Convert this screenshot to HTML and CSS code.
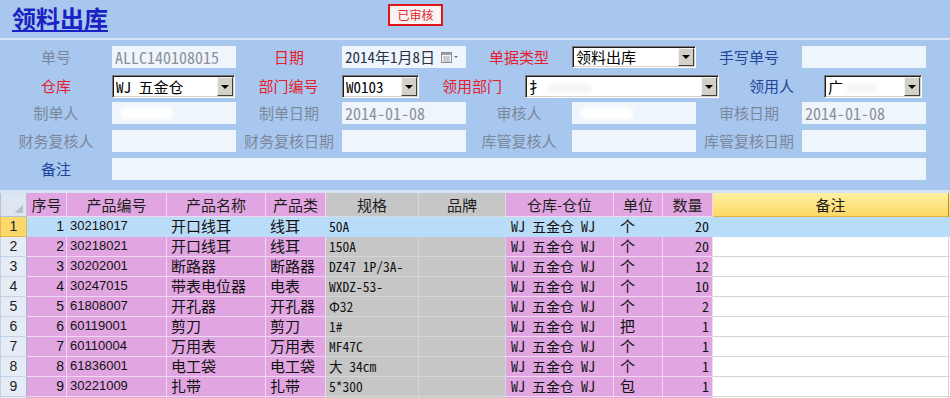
FILE: index.html
```html
<!DOCTYPE html>
<html lang="zh-CN">
<head>
    <meta charset="utf-8" />
    <title>领料出库</title>
    <link rel="stylesheet" href="styles.css">
</head>
<body>
<div class="bill">
    <header class="bill-head">
        <h1 class="bill-title">领料出库</h1>
        <span class="stamp">已审核</span>
    </header>

    <div class="bill-form">
        <div class="row row-first">
            <label class="lbl gray">单号</label>
            <div class="field">ALLC140108015</div>
            <label class="lbl red">日期</label>
            <div class="field date">
                <span class="date-text">2014年1月8日</span>
                <svg class="cal-icon" width="11" height="11" viewBox="0 0 11 11">
                    <rect x="0.5" y="0.5" width="10" height="10" fill="#f4f4f4" stroke="#8a8f98" />
                    <rect x="1" y="1" width="9" height="2" fill="#9aa0a8" />
                    <path d="M2 5h7M2 7h7M2 9h7M4 4v6M7 4v6" stroke="#b4b8be" stroke-width="1" />
                </svg>
                <span class="mini-arrow"></span>
            </div>
            <label class="lbl red">单据类型</label>
            <div class="combo"><span class="val">领料出库</span><i class="drop"></i></div>
            <label class="lbl blue">手写单号</label>
            <div class="field"></div>
        </div>

        <div class="row row-dept">
            <label class="lbl red">仓库</label>
            <div class="combo"><span class="val">WJ 五金仓</span><i class="drop"></i></div>
            <label class="lbl red">部门编号</label>
            <div class="combo"><span class="val">W0103</span><i class="drop"></i></div>
            <label class="lbl red">领用部门</label>
            <div class="combo"><span class="val">扌<b class="smudge"></b></span><i class="drop"></i></div>
            <label class="lbl blue">领用人</label>
            <div class="combo"><span class="val">广<b class="smudge short"></b></span><i class="drop"></i></div>
        </div>

        <div class="row">
            <label class="lbl gray">制单人</label>
            <div class="field"><b class="smudge white"></b></div>
            <label class="lbl gray">制单日期</label>
            <div class="field">2014-01-08</div>
            <label class="lbl gray">审核人</label>
            <div class="field"><b class="smudge white"></b></div>
            <label class="lbl gray">审核日期</label>
            <div class="field">2014-01-08</div>
        </div>

        <div class="row">
            <label class="lbl gray">财务复核人</label>
            <div class="field"></div>
            <label class="lbl gray">财务复核日期</label>
            <div class="field"></div>
            <label class="lbl gray">库管复核人</label>
            <div class="field"></div>
            <label class="lbl gray">库管复核日期</label>
            <div class="field"></div>
        </div>

        <div class="row row-note">
            <label class="lbl blue">备注</label>
            <div class="field"></div>
        </div>
    </div>

    <table class="lines">
        <colgroup>
            <col style="width:26px"><col style="width:40px"><col style="width:100px"><col style="width:99px">
            <col style="width:60px"><col style="width:93px"><col style="width:87px"><col style="width:108px">
            <col style="width:49px"><col style="width:50px"><col style="width:236px"><col style="width:2px">
        </colgroup>
        <thead>
            <tr>
                <th class="corner"></th>
                <th>序号</th>
                <th>产品编号</th>
                <th>产品名称</th>
                <th>产品类</th>
                <th class="grey">规格</th>
                <th class="grey">品牌</th>
                <th>仓库-仓位</th>
                <th>单位</th>
                <th>数量</th>
                <th class="active">备注</th>
                <th class="active"></th>
            </tr>
        </thead>
        <tbody>
            <tr class="current">
                <th>1</th><td>1</td><td>30218017</td><td>开口线耳</td><td>线耳</td><td>50A</td><td></td>
                <td>WJ 五金仓 WJ</td><td>个</td><td>20</td><td></td><td></td>
            </tr>
            <tr>
                <th>2</th><td>2</td><td>30218021</td><td>开口线耳</td><td>线耳</td><td>150A</td><td></td>
                <td>WJ 五金仓 WJ</td><td>个</td><td>20</td><td></td><td></td>
            </tr>
            <tr>
                <th>3</th><td>3</td><td>30202001</td><td>断路器</td><td>断路器</td><td>DZ47 1P/3A-</td><td></td>
                <td>WJ 五金仓 WJ</td><td>个</td><td>12</td><td></td><td></td>
            </tr>
            <tr>
                <th>4</th><td>4</td><td>30247015</td><td>带表电位器</td><td>电表</td><td>WXDZ-53-</td><td></td>
                <td>WJ 五金仓 WJ</td><td>个</td><td>10</td><td></td><td></td>
            </tr>
            <tr>
                <th>5</th><td>5</td><td>61808007</td><td>开孔器</td><td>开孔器</td><td>Φ32</td><td></td>
                <td>WJ 五金仓 WJ</td><td>个</td><td>2</td><td></td><td></td>
            </tr>
            <tr>
                <th>6</th><td>6</td><td>60119001</td><td>剪刀</td><td>剪刀</td><td>1#</td><td></td>
                <td>WJ 五金仓 WJ</td><td>把</td><td>1</td><td></td><td></td>
            </tr>
            <tr>
                <th>7</th><td>7</td><td>60110004</td><td>万用表</td><td>万用表</td><td>MF47C</td><td></td>
                <td>WJ 五金仓 WJ</td><td>个</td><td>1</td><td></td><td></td>
            </tr>
            <tr>
                <th>8</th><td>8</td><td>61836001</td><td>电工袋</td><td>电工袋</td><td>大 34cm</td><td></td>
                <td>WJ 五金仓 WJ</td><td>个</td><td>1</td><td></td><td></td>
            </tr>
            <tr>
                <th>9</th><td>9</td><td>30221009</td><td>扎带</td><td>扎带</td><td>5*300</td><td></td>
                <td>WJ 五金仓 WJ</td><td>包</td><td>1</td><td></td><td></td>
            </tr>
            <tr>
                <th>10</th><td>10</td><td>30247016</td><td>带表电流表</td><td>电表</td><td>WXDZ-54-</td><td></td>
                <td>WJ 五金仓 WJ</td><td>个</td><td>2</td><td></td><td></td>
            </tr>
        </tbody>
    </table>
</div>
</body>
</html>
```

FILE: styles.css
```css
* {
    box-sizing: border-box;
}

body {
    margin: 0;
    background: #a8c7ef;
    font-family: "Noto Sans CJK SC", sans-serif;
    overflow: hidden;
}

.bill {
    width: 950px;
    height: 398px;
    overflow: hidden;
}

/* title bar */
.bill-head {
    height: 40px;
    display: flex;
    align-items: flex-start;
    border-bottom: 2px solid #d6e4f6;
}

.bill-title {
    width: 388px;
    margin: 0;
    padding: 0 0 0 12px;
    font-size: 24px;
    line-height: 35px;
    font-weight: bold;
    color: #1a22c4;
    text-decoration: underline;
    text-underline-offset: 2px;
}

.stamp {
    margin-top: 4px;
    width: 55px;
    height: 22px;
    border: 2px solid #e01616;
    background: #faf3f2;
    color: #e0282c;
    font-size: 12px;
    line-height: 18px;
    text-align: center;
}

/* header form */
.bill-form {
    padding: 6px 0 10px;
    border-bottom: 3px solid #d4e2f5;
}

.row {
    display: grid;
    grid-template-columns: 112px 124px 106px 124px 106px 124px 106px 124px;
    height: 22px;
    margin-bottom: 6px;
}

.row-first {
    margin-bottom: 7px;
}

.row-dept {
    grid-template-columns: 112px 123px 107px 77px 106px 194px 105px 98px;
    height: 23px;
    margin-bottom: 4px;
}

.row-note {
    grid-template-columns: 112px 814px;
    margin-bottom: 0;
}

.lbl {
    font-size: 15px;
    line-height: 22px;
    text-align: center;
    white-space: nowrap;
}

.lbl.gray { color: #7b879b; }
.lbl.red { color: #e3202c; }
.lbl.blue { color: #21459a; }

.field {
    background: #eef5fc;
    color: #8b9098;
    font-family: "Noto Sans Mono CJK SC", "Liberation Mono", "Noto Sans CJK SC", monospace;
    font-size: 16px;
    line-height: 22px;
    padding-left: 3px;
    white-space: nowrap;
    overflow: hidden;
}

.field.date {
    display: flex;
    align-items: center;
    color: #2a3346;
}

.date-text {
    width: 93px;
    overflow: hidden;
    font-size: 15px;
}

.cal-icon {
    margin-left: 3px;
}

.mini-arrow {
    margin-left: 2px;
    border: 2px solid transparent;
    border-top: 2px solid #6a7078;
    border-bottom: 0;
}

.combo {
    display: flex;
    background: #fff;
    border: 1px solid;
    border-color: #7a7a7a #fff #fff #7a7a7a;
    box-shadow: inset 1px 1px 0 #1c1c1c, inset -1px -1px 0 #d4d0c8;
    padding: 1px;
    font-family: "Noto Sans Mono CJK SC", "Liberation Mono", "Noto Sans CJK SC", monospace;
    font-size: 15px;
    color: #000;
}

.row-first .combo {
    height: 22px;
}

.combo .val {
    flex: 1;
    padding-left: 2px;
    line-height: 19px;
    white-space: nowrap;
    overflow-x: clip;
    overflow-y: visible;
}

.row-first .combo .val {
    line-height: 18px;
}

.drop {
    width: 16px;
    display: flex;
    align-items: center;
    justify-content: center;
    background: #d4d0c8;
    border: 1px solid;
    border-color: #f4f4f4 #404040 #404040 #f4f4f4;
}

.drop::after {
    content: "";
    border: 4px solid transparent;
    border-top: 4px solid #000;
    border-bottom: 0;
}

/* privacy smear over names */
.smudge {
    display: inline-block;
    width: 44px;
    height: 9px;
    margin-left: 4px;
    vertical-align: middle;
    background: #f4f4f4;
    border-radius: 4px;
    filter: blur(2px);
}

.smudge.short {
    width: 30px;
}

.smudge.white {
    width: 52px;
    height: 12px;
    margin: 5px 0 0 6px;
    vertical-align: top;
    background: #fff;
}

/* detail grid */
.lines {
    width: 950px;
    border-collapse: collapse;
    table-layout: fixed;
    font-size: 15px;
    color: #111;
}

.lines th,
.lines td {
    padding: 0 3px;
    line-height: 18px;
    white-space: nowrap;
    overflow: hidden;
}

.lines thead th {
    height: 23px;
    line-height: 21px;
    font-weight: normal;
    color: #1e1e1e;
    background: #e1a6e1;
    border: 1px solid #efd9ef;
    border-top: 0;
}

.lines thead th.grey {
    background: #c6c6c6;
    border-color: #dadada;
}

.lines thead th.active {
    background: linear-gradient(#fff0a4, #fcd862);
    border-color: #e4b53e;
    border-right-color: #b58e2e;
}

.lines thead th.corner {
    background: linear-gradient(135deg, transparent 50%, #b3c0d2 50%) right 3px bottom 3px / 8px 8px no-repeat, #dde6f1;
    border-color: #b3c4da;
}

.lines tbody tr {
    height: 20px;
}

.lines tbody th {
    font-family: "Liberation Sans", sans-serif;
    font-size: 14px;
    font-weight: normal;
    color: #222;
    background: #e5ecf6;
    border: 1px solid #c6d2e2;
    border-right-color: #a2b8d2;
    text-align: center;
    padding: 0;
}

.lines tbody td {
    background: #e1a6e1;
    border: 1px solid #efd9ef;
}

.lines tbody td:nth-child(2) {
    font-family: "Liberation Sans", sans-serif;
    font-size: 14px;
    text-align: right;
    padding-right: 2px;
}

.lines tbody td:nth-child(3) {
    font-family: "Liberation Sans", sans-serif;
    font-size: 13px;
}

.lines tbody td:nth-child(4),
.lines tbody td:nth-child(5) {
    padding-left: 4px;
}

.lines tbody td:nth-child(6),
.lines tbody td:nth-child(7) {
    background: #c6c6c6;
    border-color: #d6d6d6;
}

.lines tbody td:nth-child(6) {
    font-family: "Noto Sans Mono CJK SC", "Liberation Mono", "Noto Sans CJK SC", monospace;
    font-size: 13.5px;
}

.lines tbody td:nth-child(8),
.lines tbody td:nth-child(10) {
    font-family: "Noto Sans Mono CJK SC", "Liberation Mono", "Noto Sans CJK SC", monospace;
    font-size: 14px;
}

.lines tbody td:nth-child(8) {
    padding-left: 5px;
}

.lines tbody td:nth-child(9) {
    padding-left: 6px;
}

.lines tbody td:nth-child(10) {
    text-align: right;
    padding-right: 3px;
}

.lines tbody td:nth-child(11),
.lines tbody td:nth-child(12) {
    background: #fff;
    border-color: #d4d4d4;
}

.lines tbody tr.current td {
    background: #b9dcf8;
    border-color: #b9dcf8;
}

.lines tbody tr.current th {
    background: #fbd86c;
    border-color: #e2b84a;
}
```
